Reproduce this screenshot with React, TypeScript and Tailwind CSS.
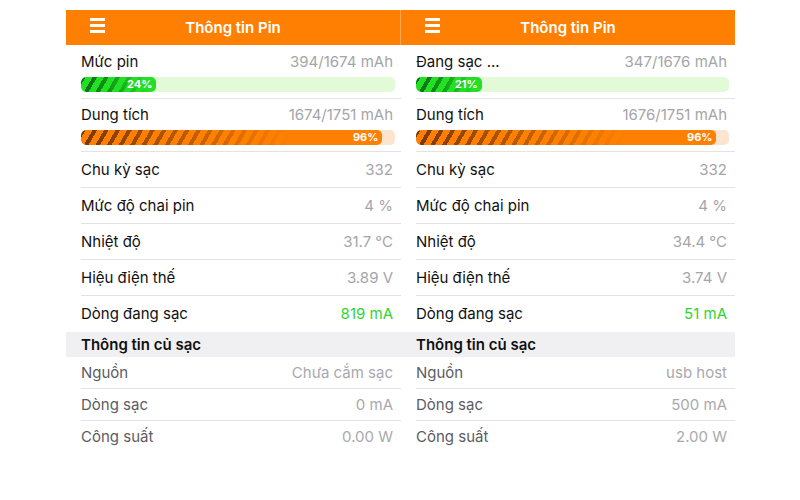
import React from "react";

type Panel = {
  status: string;
  charge: string;
  chargePct: number;
  capacity: string;
  capacityPct: number;
  cycles: string;
  wear: string;
  temp: string;
  voltage: string;
  current: string;
  source: string;
  chargerCurrent: string;
  power: string;
  divider?: boolean;
};

const panels: Panel[] = [
  {
    status: "Mức pin",
    charge: "394/1674 mAh",
    chargePct: 24,
    capacity: "1674/1751 mAh",
    capacityPct: 96,
    cycles: "332",
    wear: "4 %",
    temp: "31.7 °C",
    voltage: "3.89 V",
    current: "819 mA",
    source: "Chưa cắm sạc",
    chargerCurrent: "0 mA",
    power: "0.00 W",
    divider: true,
  },
  {
    status: "Đang sạc ...",
    charge: "347/1676 mAh",
    chargePct: 21,
    capacity: "1676/1751 mAh",
    capacityPct: 96,
    cycles: "332",
    wear: "4 %",
    temp: "34.4 °C",
    voltage: "3.74 V",
    current: "51 mA",
    source: "usb host",
    chargerCurrent: "500 mA",
    power: "2.00 W",
  },
];

function Bar({ pct, tone }: { pct: number; tone: "green" | "orange" }) {
  const track = tone === "green" ? "bg-[#e2fbd6]" : "bg-[#fde4cf]";
  const fill =
    tone === "green"
      ? "bg-[linear-gradient(to_right,rgba(36,224,36,0)_15%,#24e024_90%),repeating-linear-gradient(120deg,#0b7a12_0px,#0b7a12_4px,#24e024_4px,#24e024_10px)]"
      : "bg-[linear-gradient(to_right,rgba(254,128,2,0)_0%,#fe8002_70%),repeating-linear-gradient(120deg,#7a3604_0px,#7a3604_4px,#fe8002_4px,#fe8002_10px)]";
  return (
    <div className={`mt-[5px] mr-[6px] h-[15px] rounded-[5px] overflow-hidden ${track}`}>
      <div
        className={`h-full rounded-[5px] flex items-center justify-end pr-[4px] ${fill}`}
        style={{ width: `${pct}%` }}
      >
        <span className="text-[11px] font-bold text-white leading-none">{pct}%</span>
      </div>
    </div>
  );
}

function Row({ label, value, green, last }: { label: string; value: string; green?: boolean; last?: boolean }) {
  return (
    <div className={`ml-[15px] pr-[8px] h-[36px] flex items-center justify-between ${last ? "" : "border-b border-[#e3e3e6]"}`}>
      <span className="text-[#111]">{label}</span>
      <span className={green ? "text-[#2fd52f]" : "text-[#a5a5a9]"}>{value}</span>
    </div>
  );
}

function SubRow({ label, value, last }: { label: string; value: string; last?: boolean }) {
  return (
    <div className={`ml-[15px] pr-[8px] h-[32px] flex items-center justify-between ${last ? "" : "border-b border-[#e3e3e6]"}`}>
      <span className="text-[#5c5c5f]">{label}</span>
      <span className="text-[#a9a9ad]">{value}</span>
    </div>
  );
}

function BatteryPanel({ p }: { p: Panel }) {
  return (
    <div className={`${p.divider ? "w-[335px]" : "w-[334px]"} text-[15px] leading-[20px]`}>
      <div className={`h-[35px] bg-[#fe7f02] flex items-center relative ${p.divider ? "border-r border-[#ffa550]" : ""}`}>
        <div className="absolute left-[24px] top-[8px] flex flex-col gap-[3px]">
          <div className="w-[15px] h-[3px] bg-white" />
          <div className="w-[15px] h-[3px] bg-white" />
          <div className="w-[15px] h-[3px] bg-white" />
        </div>
        <div className="flex-1 text-center text-white font-semibold">Thông tin Pin</div>
      </div>

      <div className="ml-[15px] pt-[7px] pb-[6px] border-b border-[#e3e3e6]">
        <div className="flex justify-between pr-[8px]">
          <span className="text-[#111]">{p.status}</span>
          <span className="text-[#a5a5a9]">{p.charge}</span>
        </div>
        <Bar pct={p.chargePct} tone="green" />
      </div>

      <div className="ml-[15px] pt-[6px] pb-[6px] border-b border-[#e3e3e6]">
        <div className="flex justify-between pr-[8px]">
          <span className="text-[#111]">Dung tích</span>
          <span className="text-[#a5a5a9]">{p.capacity}</span>
        </div>
        <Bar pct={p.capacityPct} tone="orange" />
      </div>

      <Row label="Chu kỳ sạc" value={p.cycles} />
      <Row label="Mức độ chai pin" value={p.wear} />
      <Row label="Nhiệt độ" value={p.temp} />
      <Row label="Hiệu điện thế" value={p.voltage} />
      <Row label="Dòng đang sạc" value={p.current} green last />

      <div className="h-[25px] bg-[#f0f0f2] pl-[15px] flex items-center font-semibold text-[#111]">
        Thông tin củ sạc
      </div>
      <SubRow label="Nguồn" value={p.source} />
      <SubRow label="Dòng sạc" value={p.chargerCurrent} />
      <SubRow label="Công suất" value={p.power} last />
    </div>
  );
}

export default function App() {
  return (
    <div className="w-[800px] h-[500px] bg-white pt-[10px] pl-[66px] flex font-['Inter','Liberation_Sans',sans-serif]">
      {panels.map((p, i) => (
        <BatteryPanel key={i} p={p} />
      ))}
    </div>
  );
}
